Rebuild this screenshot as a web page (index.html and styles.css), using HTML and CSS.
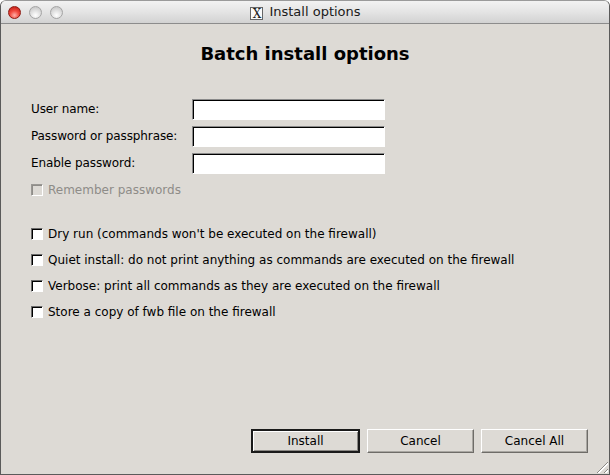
FILE: index.html
```html
<!DOCTYPE html>
<html>
<head>
<meta charset="utf-8">
<title>Install options</title>
<link rel="stylesheet" href="styles.css">
</head>
<body>
<div class="window">
  <div class="titlebar">
    <div class="lights">
      <span class="light light-close"></span>
      <span class="light light-min"></span>
      <span class="light light-zoom"></span>
    </div>
    <div class="title"><span class="x-icon">X</span>Install options</div>
  </div>
  <div class="content">
    <h1 class="heading">Batch install options</h1>
    <div class="fields">
      <label class="field-label">User name:</label>
      <span class="entry"></span>
      <label class="field-label">Password or passphrase:</label>
      <span class="entry"></span>
      <label class="field-label">Enable password:</label>
      <span class="entry"></span>
    </div>
    <div class="check-row remember disabled"><span class="check"></span>Remember passwords</div>
    <div class="options">
      <div class="check-row"><span class="check"></span>Dry run (commands won't be executed on the firewall)</div>
      <div class="check-row"><span class="check"></span>Quiet install: do not print anything as commands are executed on the firewall</div>
      <div class="check-row"><span class="check"></span>Verbose: print all commands as they are executed on the firewall</div>
      <div class="check-row"><span class="check"></span>Store a copy of fwb file on the firewall</div>
    </div>
    <div class="buttons">
      <button class="btn btn-default">Install</button>
      <button class="btn">Cancel</button>
      <button class="btn">Cancel All</button>
    </div>
  </div>
  <span class="grip"></span>
</div>
</body>
</html>
```

FILE: styles.css
```css
html, body {
  margin: 0;
  padding: 0;
  background: #ffffff;
}

body {
  font-family: "DejaVu Sans", sans-serif;
  font-size: 12px;
  color: #000;
}

.window {
  position: relative;
  width: 610px;
  height: 475px;
  box-sizing: border-box;
  border: 1px solid #5a5a5a;
  border-top-color: #9a9a9a;
  border-radius: 6px 6px 0 0;
  background: #dddad5;
  display: flex;
  flex-direction: column;
  overflow: hidden;
}

/* title bar */
.titlebar {
  height: 22px;
  flex: 0 0 22px;
  background: linear-gradient(#f2f2f2, #e4e4e4 50%, #d2d2d2);
  border-bottom: 1px solid #8c8c8c;
  display: flex;
  align-items: center;
  position: relative;
}

.lights {
  display: flex;
  gap: 8px;
  padding-left: 7px;
  align-items: center;
}

.light {
  width: 13px;
  height: 13px;
  border-radius: 50%;
  box-sizing: border-box;
}

.light-close {
  background: radial-gradient(circle at 50% 75%, #ffb0a8 0, #f24a3e 45%, #b5140c 100%);
  border: 1px solid #8e1a12;
}

.light-min,
.light-zoom {
  background: radial-gradient(circle at 50% 75%, #ffffff 0, #e2e2e2 45%, #bdbdbd 100%);
  border: 1px solid #a4a4a4;
}

.title {
  position: absolute;
  left: 0;
  right: 0;
  text-align: center;
  font-size: 13px;
  color: #1a1a1a;
  line-height: 22px;
  padding-left: 1px;
}

.x-icon {
  display: inline-block;
  width: 13px;
  height: 13px;
  box-sizing: border-box;
  border: 1px solid #666;
  background: #fafafa;
  font-family: "DejaVu Serif", serif;
  font-size: 12px;
  line-height: 12px;
  text-align: center;
  vertical-align: -2px;
  margin-right: 6px;
}

/* dialog body */
.content {
  flex: 1;
  display: flex;
  flex-direction: column;
  padding: 0 20px 21px 30px;
}

.heading {
  margin: 18px 0 0 -10px;
  font-size: 18px;
  line-height: 24px;
  font-weight: bold;
  text-align: center;
}

.fields {
  margin-top: 33px;
  display: grid;
  grid-template-columns: 161px 193px;
  grid-auto-rows: 21px;
  row-gap: 6px;
  align-items: center;
  letter-spacing: -0.1px;
}

.field-label {
  line-height: 21px;
}

.entry {
  display: block;
  height: 21px;
  box-sizing: border-box;
  background: #fff;
  border: 1px solid;
  border-color: #8a8a8a #ffffff #ffffff #8a8a8a;
  box-shadow: inset 1px 1px 0 #000;
}

.check-row {
  display: flex;
  align-items: center;
  height: 26px;
  white-space: nowrap;
}

.check {
  width: 12px;
  height: 12px;
  box-sizing: border-box;
  background: #fff;
  border: 1px solid;
  border-color: #6a6a6a #ffffff #ffffff #6a6a6a;
  box-shadow: inset 1px 1px 0 #000;
  margin-right: 5px;
  flex: 0 0 auto;
}

.remember {
  margin-top: 3px;
}

.disabled {
  color: #8e8c88;
}

.disabled .check {
  background: #dddad5;
  border-color: #9a9894 #ffffff #ffffff #9a9894;
  box-shadow: inset 1px 1px 0 #8e8c88;
}

.options {
  margin-top: 18px;
  display: flex;
  flex-direction: column;
}

.buttons {
  margin-top: auto;
  display: flex;
  justify-content: flex-end;
  gap: 7px;
  margin-right: 1px;
}

.btn {
  width: 107px;
  height: 24px;
  box-sizing: border-box;
  font-family: "DejaVu Sans", sans-serif;
  font-size: 12px;
  color: #000;
  background: #dddad5;
  border: 1px solid;
  border-color: #ffffff #6e6c68 #6e6c68 #ffffff;
  box-shadow: inset -1px -1px 0 #a9a7a2;
  padding: 0;
}

.btn-default {
  width: 109px;
  border: 2px solid;
  border-color: #1a1a1a;
  box-shadow: inset 1px 1px 0 #ffffff, inset -1px -1px 0 #8a8884;
}

/* size grip in the corner */
.grip {
  position: absolute;
  right: 1px;
  bottom: 1px;
  width: 15px;
  height: 15px;
  background: repeating-linear-gradient(135deg, transparent 0 3px, #8c8a86 3px 4px, #ffffff 4px 5px);
  clip-path: polygon(100% 0, 100% 100%, 0 100%);
}
```
